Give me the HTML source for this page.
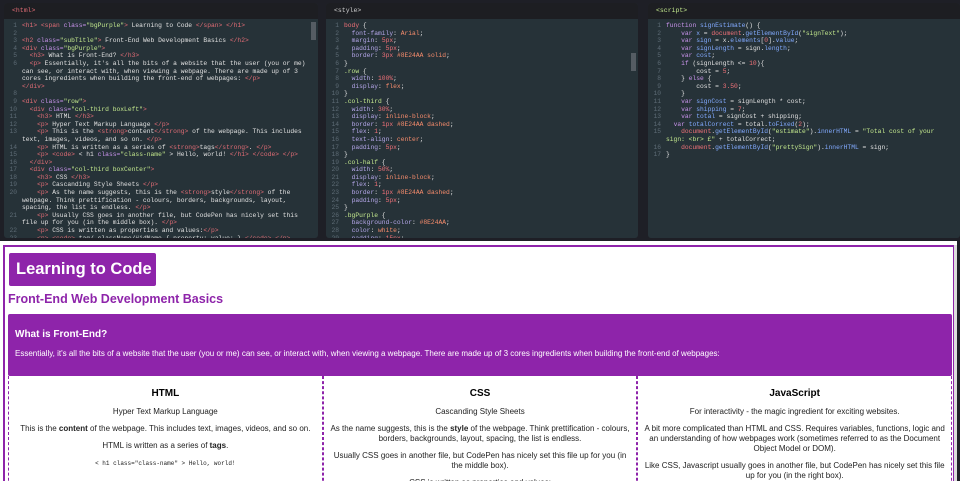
<!DOCTYPE html>
<html><head><meta charset="utf-8"><style>
*{margin:0;padding:0;box-sizing:border-box}
html,body{width:960px;height:481px;overflow:hidden}
body{background:#1e1f26;font-family:"Liberation Sans",Arial,sans-serif;position:relative}
.pane{position:absolute;top:3px;height:235px;background:#263238;border-radius:3px;overflow:hidden}
.hd{height:16px;background:#1d1e22;color:#ccc;font:6.5px "Liberation Mono",monospace;padding:4px 0 0 8px}
.code{font:6.3px/7.6px "Liberation Mono",monospace;color:#e0e0e0;padding:3px 4px 0 18px;white-space:pre-wrap;position:relative}
.ln{position:absolute;left:0;width:13px;text-align:right;color:#5d6b75}
.t{color:#e06c75}.a{color:#c792ea}.s{color:#c3e88d}.k{color:#c792ea}.n{color:#f07178}.v{color:#f78c6c}.f{color:#82aaff}.p{color:#b4a6e8}
.sb{position:absolute;right:2px;top:19px;width:5px;height:18px;background:#555c63}
#prev{position:absolute;left:0;top:241px;width:957px;height:240px;background:#fff;overflow:hidden}
#frame{position:absolute;left:3px;top:4px;width:952px;height:240px;border:2px solid #8E24AA;border-bottom:none}
h1{position:absolute;left:4px;top:6px;background:#8E24AA;color:#fff;font-size:16.5px;font-weight:bold;padding:7px 7px;border-radius:2px;height:33px;width:147px;white-space:nowrap}
h2{position:absolute;left:3px;top:45px;color:#8E24AA;font-size:12.5px}
.blk{position:absolute;left:3px;top:67px;width:944px;height:62px;background:#8E24AA;color:#fff;padding:15px 7px;border-radius:2px}
.blk h3{font-size:10px;margin-bottom:9px}
.blk p{font-size:8px}
.row{position:absolute;left:3px;top:129px;width:944px;display:flex}
.col{flex:1;border:1px dashed #8E24AA;border-top:none;text-align:center;font-size:8px;color:#222;padding:13px 5px;height:120px;line-height:10px}
.col h3{font-size:10px;color:#000;margin-bottom:8px}
.col p{margin-bottom:7px}
.col code{font:6px "Liberation Mono",monospace}
.psb{position:absolute;right:0;top:4px;width:3px;height:240px;background:#ddd}
</style></head><body>
<div class="pane" style="left:4px;width:314px"><div class="hd" style="color:#e06c75">&lt;html&gt;</div><div class="sb"></div>
<div class="code"><span class="ln">1</span><span class="t">&lt;h1&gt; &lt;span</span> <span class="a">class=</span><span class="s">"bgPurple"</span><span class="t">&gt;</span> Learning to Code <span class="t">&lt;/span&gt; &lt;/h1&gt;</span>
<span class="ln">2</span>
<span class="ln">3</span><span class="t">&lt;h2</span> <span class="a">class=</span><span class="s">"subTitle"</span><span class="t">&gt;</span> Front-End Web Development Basics <span class="t">&lt;/h2&gt;</span>
<span class="ln">4</span><span class="t">&lt;div</span> <span class="a">class=</span><span class="s">"bgPurple"</span><span class="t">&gt;</span>
<span class="ln">5</span>  <span class="t">&lt;h3&gt;</span> What is Front-End? <span class="t">&lt;/h3&gt;</span>
<span class="ln">6</span>  <span class="t">&lt;p&gt;</span> Essentially, it's all the bits of a website that the user (you or me) can see, or interact with, when viewing a webpage. There are made up of 3 cores ingredients when building the front-end of webpages: <span class="t">&lt;/p&gt;</span>
<span class="t">&lt;/div&gt;</span>
<span class="ln">8</span>
<span class="ln">9</span><span class="t">&lt;div</span> <span class="a">class=</span><span class="s">"row"</span><span class="t">&gt;</span>
<span class="ln">10</span>  <span class="t">&lt;div</span> <span class="a">class=</span><span class="s">"col-third boxLeft"</span><span class="t">&gt;</span>
<span class="ln">11</span>    <span class="t">&lt;h3&gt;</span> HTML <span class="t">&lt;/h3&gt;</span>
<span class="ln">12</span>    <span class="t">&lt;p&gt;</span> Hyper Text Markup Language <span class="t">&lt;/p&gt;</span>
<span class="ln">13</span>    <span class="t">&lt;p&gt;</span> This is the <span class="t">&lt;strong&gt;</span>content<span class="t">&lt;/strong&gt;</span> of the webpage. This includes text, images, videos, and so on. <span class="t">&lt;/p&gt;</span>
<span class="ln">14</span>    <span class="t">&lt;p&gt;</span> HTML is written as a series of <span class="t">&lt;strong&gt;</span>tags<span class="t">&lt;/strong&gt;</span>. <span class="t">&lt;/p&gt;</span>
<span class="ln">15</span>    <span class="t">&lt;p&gt; &lt;code&gt;</span> &lt; h1 <span class="a">class=</span><span class="s">"class-name"</span> &gt; Hello, world! <span class="t">&lt;/h1&gt; &lt;/code&gt; &lt;/p&gt;</span>
<span class="ln">16</span>  <span class="t">&lt;/div&gt;</span>
<span class="ln">17</span>  <span class="t">&lt;div</span> <span class="a">class=</span><span class="s">"col-third boxCenter"</span><span class="t">&gt;</span>
<span class="ln">18</span>    <span class="t">&lt;h3&gt;</span> CSS <span class="t">&lt;/h3&gt;</span>
<span class="ln">19</span>    <span class="t">&lt;p&gt;</span> Cascanding Style Sheets <span class="t">&lt;/p&gt;</span>
<span class="ln">20</span>    <span class="t">&lt;p&gt;</span> As the name suggests, this is the <span class="t">&lt;strong&gt;</span>style<span class="t">&lt;/strong&gt;</span> of the webpage. Think prettification - colours, borders, backgrounds, layout, spacing, the list is endless. <span class="t">&lt;/p&gt;</span>
<span class="ln">21</span>    <span class="t">&lt;p&gt;</span> Usually CSS goes in another file, but CodePen has nicely set this file up for you (in the middle box). <span class="t">&lt;/p&gt;</span>
<span class="ln">22</span>    <span class="t">&lt;p&gt;</span> CSS is written as properties and values:<span class="t">&lt;/p&gt;</span>
<span class="ln">23</span>    <span class="t">&lt;p&gt; &lt;code&gt;</span> tag/.className/#idName { property: value; } <span class="t">&lt;/code&gt; &lt;/p&gt;</span></div></div>

<div class="pane" style="left:326px;width:312px"><div class="hd">&lt;style&gt;</div><div class="sb" style="top:50px"></div>
<div class="code"><span class="ln">1</span><span class="n">body</span> {
<span class="ln">2</span>  <span class="p">font-family</span>: <span class="v">Arial</span>;
<span class="ln">3</span>  <span class="p">margin</span>: <span class="n">5px</span>;
<span class="ln">4</span>  <span class="p">padding</span>: <span class="n">5px</span>;
<span class="ln">5</span>  <span class="p">border</span>: <span class="n">3px</span> <span class="v">#8E24AA solid</span>;
<span class="ln">6</span>}
<span class="ln">7</span><span class="s">.row</span> {
<span class="ln">8</span>  <span class="p">width</span>: <span class="n">100%</span>;
<span class="ln">9</span>  <span class="p">display</span>: <span class="v">flex</span>;
<span class="ln">10</span>}
<span class="ln">11</span><span class="s">.col-third</span> {
<span class="ln">12</span>  <span class="p">width</span>: <span class="n">30%</span>;
<span class="ln">13</span>  <span class="p">display</span>: <span class="v">inline-block</span>;
<span class="ln">14</span>  <span class="p">border</span>: <span class="n">1px</span> <span class="v">#8E24AA dashed</span>;
<span class="ln">15</span>  <span class="p">flex</span>: <span class="n">1</span>;
<span class="ln">16</span>  <span class="p">text-align</span>: <span class="v">center</span>;
<span class="ln">17</span>  <span class="p">padding</span>: <span class="n">5px</span>;
<span class="ln">18</span>}
<span class="ln">19</span><span class="s">.col-half</span> {
<span class="ln">20</span>  <span class="p">width</span>: <span class="n">50%</span>;
<span class="ln">21</span>  <span class="p">display</span>: <span class="v">inline-block</span>;
<span class="ln">22</span>  <span class="p">flex</span>: <span class="n">1</span>;
<span class="ln">23</span>  <span class="p">border</span>: <span class="n">1px</span> <span class="v">#8E24AA dashed</span>;
<span class="ln">24</span>  <span class="p">padding</span>: <span class="n">5px</span>;
<span class="ln">25</span>}
<span class="ln">26</span><span class="s">.bgPurple</span> {
<span class="ln">27</span>  <span class="p">background-color</span>: <span class="v">#8E24AA</span>;
<span class="ln">28</span>  <span class="p">color</span>: <span class="v">white</span>;
<span class="ln">29</span>  <span class="p">padding</span>: <span class="n">15px</span>;</div></div>

<div class="pane" style="left:648px;width:312px"><div class="hd" style="color:#c3e88d">&lt;script&gt;</div>
<div class="code"><span class="ln">1</span><span class="k">function</span> <span class="f">signEstimate</span>() {
<span class="ln">2</span>    <span class="k">var</span> <span class="f">x</span> = <span class="n">document</span>.<span class="f">getElementById</span>(<span class="s">"signText"</span>);
<span class="ln">3</span>    <span class="k">var</span> <span class="f">sign</span> = x.<span class="f">elements</span>[<span class="n">0</span>].<span class="f">value</span>;
<span class="ln">4</span>    <span class="k">var</span> <span class="f">signLength</span> = sign.<span class="f">length</span>;
<span class="ln">5</span>    <span class="k">var</span> <span class="f">cost</span>;
<span class="ln">6</span>    <span class="k">if</span> (signLength &lt;= <span class="n">10</span>){
<span class="ln">7</span>        cost = <span class="n">5</span>;
<span class="ln">8</span>    } <span class="k">else</span> {
<span class="ln">9</span>        cost = <span class="n">3.50</span>;
<span class="ln">10</span>    }
<span class="ln">11</span>    <span class="k">var</span> <span class="f">signCost</span> = signLength * cost;
<span class="ln">12</span>    <span class="k">var</span> <span class="f">shipping</span> = <span class="n">7</span>;
<span class="ln">13</span>    <span class="k">var</span> <span class="f">total</span> = signCost + shipping;
<span class="ln">14</span>  <span class="k">var</span> <span class="f">totalCorrect</span> = total.<span class="f">toFixed</span>(<span class="n">2</span>);
<span class="ln">15</span>    <span class="n">document</span>.<span class="f">getElementById</span>(<span class="s">"estimate"</span>).<span class="f">innerHTML</span> = <span class="s">"Total cost of your sign: &lt;br&gt; £"</span> + totalCorrect;
<span class="ln">16</span>    <span class="n">document</span>.<span class="f">getElementById</span>(<span class="s">"prettySign"</span>).<span class="f">innerHTML</span> = sign;
<span class="ln">17</span>}</div></div>

<div id="prev"><div id="frame">
<h1>Learning to Code</h1>
<h2>Front-End Web Development Basics</h2>
<div class="blk"><h3>What is Front-End?</h3><p>Essentially, it's all the bits of a website that the user (you or me) can see, or interact with, when viewing a webpage. There are made up of 3 cores ingredients when building the front-end of webpages:</p></div>
<div class="row">
<div class="col"><h3>HTML</h3><p>Hyper Text Markup Language</p><p>This is the <b>content</b> of the webpage. This includes text, images, videos, and so on.</p><p>HTML is written as a series of <b>tags</b>.</p><p><code>&lt; h1 class="class-name" &gt; Hello, world!</code></p></div>
<div class="col"><h3>CSS</h3><p>Cascanding Style Sheets</p><p>As the name suggests, this is the <b>style</b> of the webpage. Think prettification - colours, borders, backgrounds, layout, spacing, the list is endless.</p><p>Usually CSS goes in another file, but CodePen has nicely set this file up for you (in the middle box).</p><p>CSS is written as properties and values:</p></div>
<div class="col"><h3>JavaScript</h3><p>For interactivity - the magic ingredient for exciting websites.</p><p>A bit more complicated than HTML and CSS. Requires variables, functions, logic and an understanding of how webpages work (sometimes referred to as the Document Object Model or DOM).</p><p>Like CSS, Javascript usually goes in another file, but CodePen has nicely set this file up for you (in the right box).</p></div>
</div></div><div class="psb"></div></div>
</body></html>
